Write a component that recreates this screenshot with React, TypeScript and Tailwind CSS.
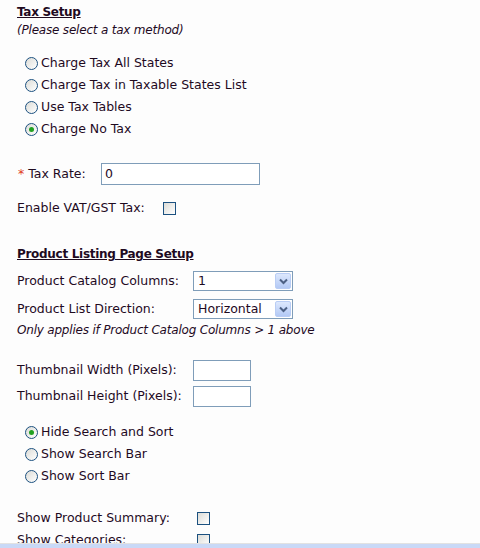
import React from "react";

const font = { fontFamily: '"DejaVu Sans", Verdana, sans-serif' };

function Radio({ checked, label }: { checked?: boolean; label: string }) {
  return (
    <div className="flex h-[22px] items-center pl-[8px]">
      <span className="relative flex h-[13px] w-[13px] items-center justify-center rounded-full border border-[#1c5180] bg-gradient-to-br from-[#dcdcd7] to-white">
        {checked && <span className="h-[5px] w-[5px] rounded-full bg-[#21a121]" />}
      </span>
      <span className="ml-[3px]">{label}</span>
    </div>
  );
}

function Check({ className = "" }: { className?: string }) {
  return (
    <span className={`inline-block h-[13px] w-[13px] border border-[#1c5180] bg-gradient-to-br from-[#dcdcd7] to-white ${className}`} />
  );
}

function Select({ value }: { value: string }) {
  return (
    <div className="flex h-[20px] w-[100px] items-center border border-[#7f9db9] bg-white pl-[4px] pr-[1px]">
      <span className="flex-1">{value}</span>
      <span className="flex h-[16px] w-[16px] items-center justify-center rounded-[2px] border border-[#b9cdf5] bg-gradient-to-b from-[#dde8fd] to-[#b3c9f5]">
        <svg width="9" height="7" viewBox="0 0 9 7">
          <path d="M1 1.5 L4.5 5 L8 1.5" fill="none" stroke="#4d6185" strokeWidth="2" />
        </svg>
      </span>
    </div>
  );
}

function Box({ className = "", value = "" }: { className?: string; value?: string }) {
  return (
    <div className={`flex items-center border border-[#7f9db9] bg-white pl-[3px] ${className}`}>{value}</div>
  );
}

export default function App() {
  return (
    <div className="flex h-[548px] w-[480px] flex-col bg-[#fdfdfd] text-[12.5px] text-[#1f0a1f]" style={font}>
      <div className="h-[543px] overflow-hidden pl-[17px] pt-[4px]">
        <div className="flex h-[16px] items-center text-[12px] font-bold tracking-[-0.3px] underline">Tax Setup</div>
        <div className="mt-[2px] flex h-[16px] items-center text-[12px] italic tracking-[-0.2px]">(Please select a tax method)</div>

        <div className="mt-[14px]">
          <Radio label="Charge Tax All States" />
          <Radio label="Charge Tax in Taxable States List" />
          <Radio label="Use Tax Tables" />
          <Radio checked label="Charge No Tax" />
        </div>

        <div className="mt-[23px] flex h-[22px] items-center">
          <span className="w-[84px] pl-[1px]">
            <span className="text-[#e03a1a]">*</span> Tax Rate:
          </span>
          <Box className="h-[22px] w-[159px]" value="0" />
        </div>

        <div className="mt-[12px] flex h-[22px] items-center">
          <span className="w-[146px]">Enable VAT/GST Tax:</span>
          <Check />
        </div>

        <div className="mt-[27px] flex h-[16px] items-center text-[12px] font-bold tracking-[-0.3px] underline">Product Listing Page Setup</div>

        <div className="mt-[8px] flex h-[22px] items-center">
          <span className="w-[176px]">Product Catalog Columns:</span>
          <Select value="1" />
        </div>
        <div className="mt-[6px] flex h-[22px] items-center">
          <span className="w-[176px]">Product List Direction:</span>
          <Select value="Horizontal" />
        </div>
        <div className="mt-[2px] flex h-[16px] items-center text-[12px] italic tracking-[-0.2px]">Only applies if Product Catalog Columns &gt; 1 above</div>

        <div className="mt-[21px] flex h-[22px] items-center">
          <span className="w-[176px]">Thumbnail Width (Pixels):</span>
          <Box className="h-[21px] w-[58px]" />
        </div>
        <div className="mt-[4px] flex h-[22px] items-center">
          <span className="w-[176px]">Thumbnail Height (Pixels):</span>
          <Box className="h-[21px] w-[58px]" />
        </div>

        <div className="mt-[14px]">
          <Radio checked label="Hide Search and Sort" />
          <Radio label="Show Search Bar" />
          <Radio label="Show Sort Bar" />
        </div>

        <div className="mt-[20px] flex h-[22px] items-center">
          <span className="w-[180px]">Show Product Summary:</span>
          <Check />
        </div>
        <div className="flex h-[22px] items-center">
          <span className="w-[180px]">Show Categories:</span>
          <Check />
        </div>
      </div>
      <div className="h-px bg-[#e2e2e2]" />
      <div className="flex-1 bg-[#c9d9f7]" />
    </div>
  );
}
